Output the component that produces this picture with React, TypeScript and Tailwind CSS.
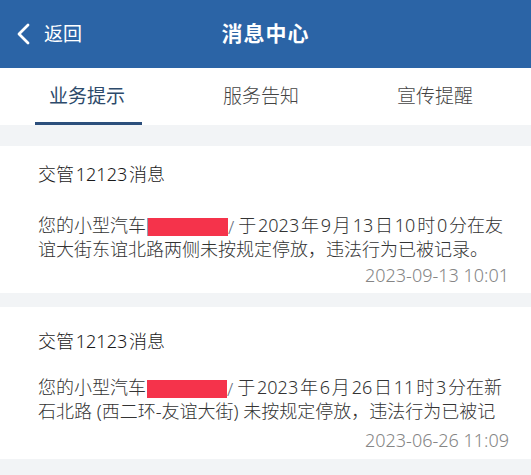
import React from 'react';

const FONT = { fontFamily: '"Noto Sans", "Noto Sans CJK SC", sans-serif' };

type Msg = {
  lines: [string, string];
  time: string;
  bar?: boolean;
  pad: string;
  bodyGap: string;
  timeGap: string;
};

// hair spaces between CJK and digits, as in the app
const messages: Msg[] = [
  {
    lines: ['于\u200A2023\u200A年\u200A9\u200A月\u200A13\u200A日\u200A10\u200A时\u200A0\u200A分在友', '谊大街东谊北路两侧未按规定停放，违法行为已被记录。'],
    time: '2023-09-13 10:01',
    bar: true,
    pad: 'pt-[16px] pb-[6px]',
    bodyGap: 'mt-[28px]',
    timeGap: 'mt-[3px]',
  },
  {
    lines: ['于\u200A2023\u200A年\u200A6\u200A月\u200A26\u200A日\u200A11\u200A时\u200A3\u200A分在新', '石北路 (西二环-友谊大街) 未按规定停放，违法行为已被记'],
    time: '2023-06-26 11:09',
    pad: 'pt-[22px] pb-[7px]',
    bodyGap: 'mt-[23px]',
    timeGap: 'mt-[6px]',
  },
];

function Redacted({ bar }: { bar?: boolean }) {
  return (
    <span className="inline-flex items-center align-middle mx-[1px]">
      {bar && <span className="w-[1px] h-[18px] bg-gray-400" />}
      <span className="w-[80px] h-[18px] bg-[#f5334b]" />
      <span className="text-gray-500 mr-[3px]">/</span>
    </span>
  );
}

function MessageCard({ msg }: { msg: Msg }) {
  return (
    <div className={`bg-white pl-[38px] pr-[22px] ${msg.pad}`}>
      <div className="text-[18px] leading-[24px] text-[#1a1a1a] font-light">交管&#8202;12123&#8202;消息</div>
      <div className={`${msg.bodyGap} text-[18px] leading-[22px] text-[#333] font-light whitespace-nowrap`}>
        <div>
          您的小型汽车
          <Redacted bar={msg.bar} />
          {msg.lines[0]}
        </div>
        <div>{msg.lines[1]}</div>
      </div>
      <div className={`${msg.timeGap} text-right text-[18px] leading-[24px] text-[#858585] font-light`}>{msg.time}</div>
    </div>
  );
}

export default function App() {
  return (
    <div className="w-[531px] h-[475px] overflow-hidden bg-[#f2f4f6]" style={FONT}>
      {/* Header */}
      <div className="relative h-[68px] bg-[#2b64a6] flex items-center justify-center">
        <div className="absolute left-[14px] top-0 h-full flex items-center gap-[10px] text-white">
          <svg width="20" height="24" viewBox="0 0 20 24" fill="none">
            <path d="M14 3 L5 12 L14 21" stroke="white" strokeWidth="2.8" strokeLinecap="round" strokeLinejoin="round" />
          </svg>
          <span className="text-[19px]">返回</span>
        </div>
        <span className="text-white text-[21px] font-bold tracking-[1px]">消息中心</span>
      </div>

      {/* Tabs */}
      <div className="bg-white h-[57px] grid grid-cols-[174px_174px_174px] items-center text-[19px] font-light">
        <div className="relative h-full flex items-center justify-center text-[#2d4a6b] font-normal">
          业务提示
          <div className="absolute bottom-0 left-[35px] w-[107px] h-[3px] bg-[#2c4f7c]" />
        </div>
        <div className="flex items-center justify-center text-[#444]">服务告知</div>
        <div className="flex items-center justify-center text-[#444]">宣传提醒</div>
      </div>

      {/* Messages */}
      <div className="pt-[21px] flex flex-col gap-[14px]">
        {messages.map((m) => (
          <MessageCard key={m.time} msg={m} />
        ))}
      </div>
    </div>
  );
}
